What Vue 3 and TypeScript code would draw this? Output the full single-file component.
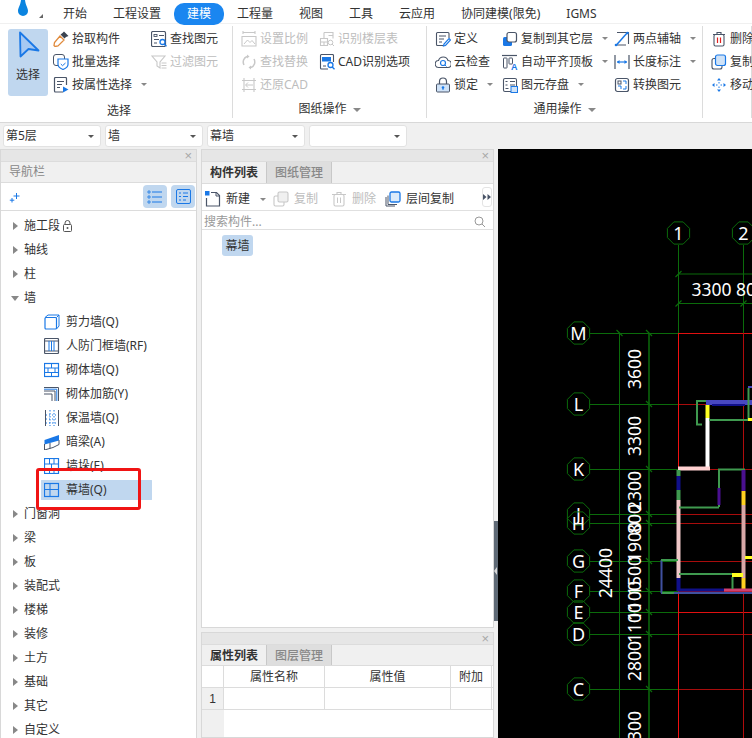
<script setup lang="ts">
const tabs = ['开始', '工程设置', '建模', '工程量', '视图', '工具', '云应用', '协同建模(限免)', 'IGMS']
const B = '#1a78e6'
const D = '#4a5568'
const G = '#c8c8c8'
const icons: Record<string, string> = {
  pick: `<path d="M11 .5l4.500 4.500-2.500 1-1.500 1.500-4-4L9.500 2z" fill="#3a4350"/><path d="M7 5l4 4-6 6-3 .5-1-1 .5-3z" fill="none" stroke="#e08a3c" stroke-width="1.300"/>`,
  batch: `<rect x=".5" y=".5" width="11" height="11" rx="2.500" fill="none" stroke="${D}"/><path d="M5 5h10v5.500c0 2.500-3 4.200-5 5-2-.8-5-2.500-5-5z" fill="#fff" stroke="${B}" stroke-width="1.200"/><path d="M7.800 10l1.700 1.700L12.500 9" fill="none" stroke="${B}"/>`,
  attr: `<path d="M10 15H2.500a1 1 0 0 1-1-1V1.500a1 1 0 0 1 1-1h10a1 1 0 0 1 1 1V8" fill="none" stroke="${D}" stroke-width="1.200"/><path d="M4 4.500h7M4 7.500h5M4 10.500h3" stroke="${D}"/><path d="M10 9.500l5.500 3-5.500 3z" fill="${B}"/>`,
  find: `<rect x=".5" y=".5" width="14" height="15" rx="1.500" fill="none" stroke="${D}" stroke-width="1.200"/><rect x="3" y="3.500" width="3" height="2" fill="none" stroke="${D}" stroke-width=".9"/><path d="M8 4.500h5M3 8.500h5M3 12h3" stroke="${D}"/><circle cx="11.500" cy="11" r="2.500" fill="#fff" stroke="${B}" stroke-width="1.300"/><path d="M13.200 13l2.300 2.300" stroke="${B}" stroke-width="1.300"/>`,
  filter: `<path d="M1 2h13L9 8v6l-3-2V8z" fill="none" stroke="${G}" stroke-width="1.100"/><path d="M10.500 9h5M10.500 11.500h5M10.500 14h5" stroke="${G}"/>`,
  scale: `<path d="M2 0v3M14 0v3M2 1.500h12M1 5.500v9.500h14V5.500z" fill="none" stroke="${G}" stroke-width="1.100"/><path d="M3 13l3.500-4 2.500 2.500 2-2 3 3.500" fill="none" stroke="${G}"/>`,
  layer: `<path d="M1.500 7.500h7v7h-7zM5 1.500h9v6M5 1.500v6M1.500 11h7M9.500 4.500H14M5 11v3.500" fill="none" stroke="${G}" stroke-width="1.100"/><circle cx="11.500" cy="11.500" r="2.300" fill="#fff" stroke="${G}"/><path d="M13 13l2 2" stroke="${G}"/>`,
  replace: `<path d="M3 11A6 6 0 0 1 6 2.500M13 5a6 6 0 0 1-3 8.500" fill="none" stroke="${G}" stroke-width="1.500"/><path d="M6 .5l2.500 2L6 4.500zM10 11.500l-2.500 2 2.500 2z" fill="${G}"/>`,
  restore: `<path d="M3 1v14M13 1v14M1 3.500h14M1 12.500h14" stroke="${G}" stroke-width="1.100"/><path d="M5 8h7M7 5.500L4.500 8 7 10.500" fill="none" stroke="${G}"/>`,
  cad: `<path d="M9 15H2.500a1 1 0 0 1-1-1V1.500a1 1 0 0 1 1-1h11a1 1 0 0 1 1 1V8" fill="none" stroke="${D}" stroke-width="1.100"/><rect x="3" y="3" width="9" height="4.500" fill="${B}"/><path d="M4 12h3" stroke="${D}"/><circle cx="11.500" cy="11" r="2.500" fill="#fff" stroke="${B}" stroke-width="1.300"/><path d="M13.200 13l2.300 2.300" stroke="${B}" stroke-width="1.300"/>`,
  define: `<path d="M14 7V2.500a1 1 0 0 0-1-1H2.500a1 1 0 0 0-1 1v11a1 1 0 0 0 1 1H8" fill="none" stroke="${D}" stroke-width="1.100"/><path d="M4 5h7M4 8h5M4 11h3" stroke="${D}"/><path d="M14 7.500l1.500 1.500L10.500 14.500 8.500 15l.5-2z" fill="none" stroke="${B}" stroke-width="1.200"/>`,
  cloud: `<path d="M4 13.500a3.500 3.500 0 0 1-.5-7A5 5 0 0 1 13 6.500a3.500 3.500 0 0 1-.5 7z" fill="none" stroke="${D}" stroke-width="1.100"/><circle cx="8" cy="9" r="2.500" fill="none" stroke="${B}" stroke-width="1.200"/><path d="M10 11l1.500 1.500" stroke="${B}"/>`,
  lock: `<path d="M4.500 7V4.500a3.500 3.500 0 0 1 7 0V7" fill="none" stroke="${D}" stroke-width="1.200"/><rect x="1.500" y="7" width="13" height="8" rx="1" fill="#cfe2f7" stroke="${D}"/><circle cx="8" cy="10.500" r="1.300" fill="${B}"/><path d="M8 11v2" stroke="${B}"/>`,
  copyto: `<rect x="1" y="6" width="9" height="9" rx="1.500" fill="${B}"/><rect x="5" y="1.500" width="9.500" height="9.500" rx="2" fill="#fff" stroke="${D}" stroke-width="1.200"/>`,
  align: `<path d="M0 1.500h15" stroke="${D}" stroke-width="1.200"/><rect x="1.500" y="4" width="3.500" height="10" rx=".5" fill="none" stroke="${D}"/><rect x="7" y="4" width="3.500" height="6" rx=".5" fill="none" stroke="${D}"/><text x="9" y="15.500" font-size="9" font-weight="700" fill="${B}" font-family="Liberation Sans">A</text>`,
  save: `<rect x="1.500" y="1.500" width="13" height="13" rx="1.500" fill="none" stroke="${D}" stroke-width="1.100"/><path d="M3.500 4.500h2M8 4.500h5M3.500 8h2M8 8h5M3.500 11.500h3" stroke="${D}"/><rect x="9" y="9.500" width="6.500" height="6" fill="#cfe2f7" stroke="${B}"/>`,
  axis: `<path d="M3 1.500h11.500V13M1 14h11" fill="none" stroke="${D}" stroke-width="1.100"/><path d="M2 14.500L13.500 1.500" stroke="${B}" stroke-width="1.500"/><circle cx="2" cy="14" r="1.300" fill="${B}"/><circle cx="13.500" cy="2" r="1.300" fill="${B}"/>`,
  dim: `<path d="M1 1v14M15 1v14" stroke="${D}" stroke-width="1.200"/><path d="M3 8h10" stroke="${B}" stroke-width="1.200"/><path d="M3 8l2.500-2v4zM13 8l-2.500-2v4z" fill="${B}"/>`,
  convert: `<rect x="1.500" y="1.500" width="13" height="13" rx="2" fill="none" stroke="${D}" stroke-width="1.200"/><rect x="4" y="4" width="3" height="3" fill="none" stroke="${D}"/><path d="M9 4h3v3M4 9h3v3M12 9v3H9" fill="none" stroke="${B}"/>`,
  trash: `<path d="M2 3.500h12M6 3.500V1.500h4v2" fill="none" stroke="${D}" stroke-width="1.100"/><rect x="3" y="3.500" width="10" height="11.500" rx="1.500" fill="none" stroke="${D}" stroke-width="1.100"/><path d="M6.500 6.500v5.500M9.500 6.500v5.500" stroke="#e02020" stroke-width="1.200"/>`,
  dup: `<rect x="1" y="4.500" width="10" height="10.500" rx="2" fill="none" stroke="${D}" stroke-width="1.100"/><rect x="4.500" y="1" width="10" height="10.500" rx="2" fill="#cfe2f7" stroke="${B}" stroke-width="1.200"/>`,
  move: `<path d="M8 1l2 2.500H6zM8 15l2-2.500H6zM1 8l2.500-2v4zM15 8l-2.500-2v4z" fill="${B}"/><path d="M8 5v1.500M8 9.500V11M5 8h1.500M9.500 8H11" stroke="${B}"/>`,
  shear: `<rect x="1" y="3.500" width="11.500" height="11.500" rx="1" fill="#fff" stroke="${B}" stroke-width="1.200"/><path d="M1 3.500l3-2.500h11v11l-2.500 3M12.500 3.500L15 1" fill="none" stroke="${B}"/>`,
  civil: `<rect x=".5" y=".5" width="14" height="15" rx="1" fill="none" stroke="${D}" stroke-width="1.200"/><path d="M1 3h13M1 13h13" stroke="${D}"/><path d="M5 3v10M7.500 3v10M10 3v10" stroke="${B}"/>`,
  brick: `<rect x=".5" y="1.500" width="14" height="13" fill="none" stroke="${B}" stroke-width="1.200"/><path d="M1 6h14M1 10.500h14M7.500 1.500V6M4 6v4.500M11 6v4.500M7.500 10.500v4" stroke="${B}"/>`,
  rebar: `<path d="M0 1.500h14.500V15M0 5h11v10M0 8h8v7" fill="none" stroke="${D}"/><path d="M0 3.200h12.800V15" fill="none" stroke="${B}"/>`,
  insu: `<path d="M1.500 0v16M14.500 0v16" stroke="${D}"/><path d="M6 0v16M10 0v16" stroke="${B}" stroke-dasharray="1.500 1.500"/><path d="M2 5h12M2 9h12M2 13h12" stroke="${B}" stroke-dasharray="1 2"/>`,
  beam: `<path d="M.5 6L15 1v5.500L.5 10.500z" fill="${B}"/><path d="M.5 10v6L9 13.500l6-3V6M6 9v5.500" fill="none" stroke="${D}"/>`,
  pilaster: `<rect x=".5" y=".5" width="14" height="15" fill="none" stroke="${B}" stroke-width="1.200"/><path d="M1 6h14M1 11h14M5.500 1v5M10 1v5M7.500 6v5M5.500 11v4M10 11v4" stroke="${B}"/>`,
  curtain: `<rect x=".5" y="1.500" width="14" height="13" fill="none" stroke="${B}" stroke-width="1.200"/><path d="M1 7.500h14M6 1.500V14.500" stroke="${B}"/>`,
  newdoc: `<path d="M6 1.500h5.500l3 3V15H1.500V7" fill="none" stroke="${D}" stroke-width="1.200"/><path d="M11 1.500v3.500h3.500" fill="none" stroke="${D}"/><rect x="0" y="0" width="4.500" height="4.500" fill="${B}"/>`,
  gcopy: `<rect x="1" y="5" width="10" height="10" rx="1.500" fill="none" stroke="${G}" stroke-width="1.100"/><rect x="5" y="1" width="10" height="10" rx="1.500" fill="#f0f0f0" stroke="${G}" stroke-width="1.100"/>`,
  gdel: `<path d="M1 3.500h14M6 3.500V1.500h4v2" fill="none" stroke="${G}" stroke-width="1.100"/><rect x="3" y="3.500" width="10" height="11.500" rx="1.500" fill="none" stroke="${G}" stroke-width="1.100"/><path d="M6.500 6.500v5.500M9.500 6.500v5.500" stroke="${G}"/>`,
  floorcopy: `<path d="M1 6v9h9M3 4.500v9h9" fill="none" stroke="${D}"/><rect x="5" y="1" width="10" height="10" rx="1.500" fill="#dcebfa" stroke="${B}" stroke-width="1.300"/>`,
}
type Item = { icon: string; label: string; caret?: boolean; off?: boolean }
type Col = { w: number; items: Item[] }
type Group = { w: number; label: string; caret: boolean; big?: boolean; cols: Col[] }
const groups: Group[] = [
  { w: 233, label: '选择', caret: false, big: true, cols: [
    { w: 98, items: [{ icon: 'pick', label: '拾取构件' }, { icon: 'batch', label: '批量选择' }, { icon: 'attr', label: '按属性选择', caret: true }] },
    { w: 80, items: [{ icon: 'find', label: '查找图元' }, { icon: 'filter', label: '过滤图元', off: true }] },
  ] },
  { w: 194, label: '图纸操作', caret: true, cols: [
    { w: 78, items: [{ icon: 'scale', label: '设置比例', off: true }, { icon: 'replace', label: '查找替换', off: true }, { icon: 'restore', label: '还原CAD', off: true }] },
    { w: 105, items: [{ icon: 'layer', label: '识别楼层表', off: true }, { icon: 'cad', label: 'CAD识别选项' }] },
  ] },
  { w: 276, label: '通用操作', caret: true, cols: [
    { w: 67, items: [{ icon: 'define', label: '定义' }, { icon: 'cloud', label: '云检查' }, { icon: 'lock', label: '锁定', caret: true }] },
    { w: 112, items: [{ icon: 'copyto', label: '复制到其它层', caret: true }, { icon: 'align', label: '自动平齐顶板', caret: true }, { icon: 'save', label: '图元存盘', caret: true }] },
    { w: 85, items: [{ icon: 'axis', label: '两点辅轴', caret: true }, { icon: 'dim', label: '长度标注', caret: true }, { icon: 'convert', label: '转换图元' }] },
  ] },
  { w: 49, label: '', caret: false, cols: [
    { w: 41, items: [{ icon: 'trash', label: '删除' }, { icon: 'dup', label: '复制' }, { icon: 'move', label: '移动' }] },
  ] },
]
const combos = ['第5层', '墙', '幕墙', '']
type Tree = { label: string; open?: boolean; lock?: boolean; icon?: string; sel?: boolean }
const tree: Tree[] = [
  { label: '施工段', lock: true }, { label: '轴线' }, { label: '柱' }, { label: '墙', open: true },
  { label: '剪力墙(Q)', icon: 'shear' }, { label: '人防门框墙(RF)', icon: 'civil' }, { label: '砌体墙(Q)', icon: 'brick' },
  { label: '砌体加筋(Y)', icon: 'rebar' }, { label: '保温墙(Q)', icon: 'insu' }, { label: '暗梁(A)', icon: 'beam' },
  { label: '墙垛(E)', icon: 'pilaster' }, { label: '幕墙(Q)', icon: 'curtain', sel: true },
  { label: '门窗洞' }, { label: '梁' }, { label: '板' }, { label: '装配式' }, { label: '楼梯' }, { label: '装修' },
  { label: '土方' }, { label: '基础' }, { label: '其它' }, { label: '自定义' },
]
const tools = [
  { icon: 'newdoc', label: '新建', caret: true, w: 68 },
  { icon: 'gcopy', label: '复制', off: true, w: 58 },
  { icon: 'gdel', label: '删除', off: true, w: 54 },
  { icon: 'floorcopy', label: '层间复制', w: 86 },
]
const GREEN = '#0b6b0b'
const rows = [
  { n: 'M', y: 333 }, { n: 'L', y: 404 }, { n: 'K', y: 469 }, { n: 'J', y: 514 }, { n: 'H', y: 523 },
  { n: 'G', y: 561 }, { n: 'F', y: 591 }, { n: 'E', y: 612 }, { n: 'D', y: 634 }, { n: 'C', y: 689 },
]
const cols = [{ n: '1', x: 678.5 }, { n: '2', x: 743.5 }]
const octagon = (x: number, y: number) => {
  const pts: string[] = []
  for (let i = 0; i < 8; i++) {
    const a = (Math.PI / 4) * i + Math.PI / 8
    pts.push(`${(x + 12 * Math.cos(a)).toFixed(1)},${(y + 12 * Math.sin(a)).toFixed(1)}`)
  }
  return pts.join(' ')
}
const dims = [
  { t: '3600', y: 369 }, { t: '3300', y: 436 }, { t: '2300', y: 491 }, { t: '800', y: 519 }, { t: '1900', y: 542 },
  { t: '1500', y: 576 }, { t: '1100', y: 601 }, { t: '1100', y: 623 }, { t: '2800', y: 661 }, { t: '3300', y: 731 },
]
const walls = [
  ['#ffffff', 707.5, 418, 707.5, 468, 4], ['#ffff20', 707.5, 405, 707.5, 418, 4],
  ['#3f9a4f', 697, 401, 706, 401, 2], ['#3f9a4f', 697, 400, 697, 425, 2], ['#3f9a4f', 696, 424.500, 702, 424.500, 2],
  ['#4848c0', 706, 402.500, 752, 402.500, 5], ['#10108a', 712, 405, 745, 405, 2],
  ['#3f9a4f', 709, 420, 748, 420, 2], ['#3f9a4f', 748.500, 388, 748.500, 420, 2], ['#4848c0', 748, 387, 752, 387, 2], ['#ffff20', 748, 419.500, 752, 419.500, 3],
  ['#ffd0d0', 678, 468.500, 710, 468.500, 4], ['#3f9a4f', 678.500, 470, 678.500, 476, 4], ['#10108a', 678.500, 476, 678.500, 490, 4],
  ['#3f9a4f', 678.500, 490, 678.500, 500, 4], ['#f0c8c8', 678.500, 500, 678.500, 578, 4], ['#10108a', 678.500, 578, 678.500, 591, 4],
  ['#3f9a4f', 719, 470, 719, 507, 2], ['#4a1090', 719, 488, 719, 505, 3], ['#3f9a4f', 679, 507.500, 719, 507.500, 2], ['#3f9a4f', 718, 469.500, 745, 469.500, 2],
  ['#4a1090', 743.500, 470, 743.500, 491, 4], ['#ffd020', 743.500, 491, 743.500, 505, 4], ['#d8a8a8', 743.500, 505, 743.500, 578, 4], ['#ffd020', 743.500, 578, 743.500, 590, 4],
  ['#ffff20', 745, 557.500, 752, 557.500, 3], ['#4050a0', 661.500, 560, 661.500, 593, 2], ['#3f9a4f', 661, 560, 678, 560, 2],
  ['#4050a0', 661, 593, 752, 593, 2], ['#3f9a4f', 662, 593, 674, 593, 2], ['#10108a', 678, 590, 724, 590, 3], ['#d04070', 724, 590, 752, 590, 3],
  ['#3f9a4f', 679, 574, 732, 574, 2], ['#ffff20', 732, 575, 743, 575, 4], ['#3f9a4f', 732.500, 577, 732.500, 589, 2],
] as [string, number, number, number, number, number][]
</script>

<template>
  <div class="app">
    <div class="tabbar">
      <svg class="drop" width="10" height="16" viewBox="0 0 10 16"><path d="M3 0h4c.5 5 3 8 3 11a5 5 0 0 1-10 0C0 8 2.500 5 3 0z" fill="#0a84e0" /></svg>
      <i class="corner"></i>
      <span v-for="t in tabs" :key="t" class="tab" :class="{ active: t === '建模' }">{{ t }}</span>
    </div>

    <div class="ribbon">
      <div v-for="g in groups" :key="g.w" class="group" :style="{ width: g.w + 'px' }">
        <div class="group-body">
          <div v-if="g.big" class="bigbtn">
            <svg width="22" height="27" viewBox="0 0 22 27"><path d="M2 1.500L20.500 19.500 10.500 18 2.500 25.500z" fill="#a6c8f2" stroke="#1a78e6" stroke-width="1.800" stroke-linejoin="round" /></svg>
            <span>选择</span>
          </div>
          <div v-for="(c, ci) in g.cols" :key="ci" class="col" :style="{ width: c.w + 'px' }">
            <div v-for="it in c.items" :key="it.label" class="item" :class="{ off: it.off }">
              <svg width="16" height="16" viewBox="0 0 16 16" v-html="icons[it.icon]"></svg>
              <span class="lbl">{{ it.label }}</span>
              <i v-if="it.caret" class="caret"></i>
            </div>
          </div>
        </div>
        <div class="group-label" :class="{ low: g.big }">{{ g.label }}<i v-if="g.caret" class="caret wide"></i></div>
      </div>
    </div>

    <div class="combos">
      <div v-for="(c, i) in combos" :key="i" class="combo"><span>{{ c }}</span><i class="caret dark"></i></div>
    </div>

    <div class="main">
      <aside class="nav">
        <div class="closebar"><span class="x">×</span></div>
        <div class="navtitle">导航栏</div>
        <div class="navtools">
          <svg width="12" height="12" viewBox="0 0 12 12"><path d="M7.500 2v6M4.500 5h6M3 7v4.500M.8 9.200h4.500" stroke="#1a78e6" fill="none" /></svg>
          <div class="toggles">
            <span class="toggle"><svg width="16" height="14" viewBox="0 0 16 14"><path d="M5 2h10M5 7h10M5 12h10" stroke="#1a78e6" /><path d="M1 1h2v2H1zM1 6h2v2H1zM1 11h2v2H1z" fill="none" stroke="#1a78e6" stroke-width=".8" /></svg></span>
            <span class="toggle"><svg width="15" height="15" viewBox="0 0 15 15"><rect x=".5" y=".5" width="14" height="14" rx="1.500" fill="none" stroke="#1a78e6" /><path d="M3 4h2M7 4h5M3 7.500h2M7 7.500h5M3 11h2M7 11h3" stroke="#1a78e6" /></svg></span>
          </div>
        </div>
        <div class="tree">
          <div v-for="n in tree" :key="n.label" class="node" :class="{ child: n.icon, sel: n.sel }">
            <template v-if="n.icon">
              <svg width="16" height="16" viewBox="0 0 16 16" v-html="icons[n.icon]"></svg>
              <span>{{ n.label }}</span>
            </template>
            <template v-else>
              <i :class="n.open ? 'tri-open' : 'tri'"></i>
              <span>{{ n.label }}</span>
              <svg v-if="n.lock" class="nodelock" width="9" height="12" viewBox="0 0 9 12"><path d="M2 4.500V3a2.500 2.500 0 0 1 5 0v1.500" fill="none" stroke="#555" /><rect x=".5" y="4.500" width="8" height="7" rx="1" fill="none" stroke="#555" /><circle cx="4.500" cy="8" r="1" fill="#555" /></svg>
            </template>
          </div>
        </div>
        <div class="redbox"></div>
      </aside>

      <section class="mid">
        <div class="panel top">
          <div class="closebar"><span class="x">×</span></div>
          <div class="tabs2"><span class="t2 on">构件列表</span><span class="t2">图纸管理</span></div>
          <div class="midtools">
            <div v-for="t in tools" :key="t.label" class="tool" :class="{ off: t.off }" :style="{ width: t.w + 'px' }">
              <svg width="16" height="16" viewBox="0 0 16 16" v-html="icons[t.icon]"></svg>
              <span>{{ t.label }}</span>
              <i v-if="t.caret" class="caret"></i>
            </div>
            <span class="more"><svg width="8" height="6" viewBox="0 0 8 6"><path d="M0 0l3.500 3L0 6zM4.500 0L8 3 4.500 6z" fill="#4a5568" /></svg></span>
          </div>
          <div class="search">
            <span>搜索构件...</span>
            <svg width="12" height="12" viewBox="0 0 12 12"><circle cx="5" cy="5" r="4" fill="none" stroke="#999" /><path d="M8 8l3 3" stroke="#999" /></svg>
          </div>
          <div class="list"><span class="chip">幕墙</span></div>
        </div>
        <div class="panel bottom">
          <div class="closebar"><span class="x">×</span></div>
          <div class="tabs2"><span class="t2 on">属性列表</span><span class="t2">图层管理</span></div>
          <div class="table">
            <div class="tr head"><span class="c0"></span><span class="c1">属性名称</span><span class="c2">属性值</span><span class="c3">附加</span></div>
            <div class="tr"><span class="c0 num">1</span><span class="c1"></span><span class="c2"></span><span class="c3"></span></div>
            <div class="tail"></div>
          </div>
        </div>
      </section>

      <div class="splitter"><i class="handle"></i></div>

      <div class="canvas">
        <svg width="254" height="589" viewBox="498 149 254 589">
          <line v-for="r in rows" :key="'g' + r.n" x1="590" x2="678.500" :y1="r.y + 0.5" :y2="r.y + 0.5" :stroke="GREEN" stroke-width="1" />
          <line v-for="r in rows" :key="'r' + r.n" x1="678.500" x2="752" :y1="r.y + 0.5" :y2="r.y + 0.5" :stroke="r.n === 'M' || r.n === 'E' ? '#e01010' : '#a80c0c'" stroke-width="1" />
          <line x1="619.500" x2="619.500" y1="333" y2="738" :stroke="GREEN" />
          <line x1="649" x2="649" y1="333" y2="738" :stroke="GREEN" stroke-width="1.500" />
          <line x1="678.500" x2="678.500" y1="245" y2="333" :stroke="GREEN" />
          <line x1="743.500" x2="743.500" y1="245" y2="333" :stroke="GREEN" />
          <line x1="678.500" x2="752" y1="274" y2="274" :stroke="GREEN" />
          <line x1="678.500" x2="752" y1="303.500" y2="303.500" :stroke="GREEN" />
          <line x1="678.500" x2="678.500" y1="333" y2="738" stroke="#f01010" />
          <line x1="743.500" x2="743.500" y1="333" y2="738" stroke="#b00c0c" />
          <path v-for="r in rows" :key="'t' + r.n" :d="`M646 ${r.y - 3}l6 6`" :stroke="GREEN" stroke-width="1.200" />
          <path d="M616.500 330l6 6M675.500 277l6-6M675.500 306.500l6-6M740.500 306.500l6-6" :stroke="GREEN" stroke-width="1.200" />
          <line v-for="(w, i) in walls" :key="i" :x1="w[1]" :y1="w[2]" :x2="w[3]" :y2="w[4]" :stroke="w[0]" :stroke-width="w[5]" />
          <g v-for="r in rows" :key="'c' + r.n">
            <polygon :points="octagon(578.5, r.y)" fill="none" :stroke="GREEN" />
            <text class="cadletter" x="578.500" :y="r.y + 6.500" text-anchor="middle">{{ r.n }}</text>
          </g>
          <g v-for="c in cols" :key="c.n">
            <polygon :points="octagon(c.x, 233)" fill="#000" :stroke="GREEN" />
            <text class="cadletter" :x="c.x" y="239.500" text-anchor="middle">{{ c.n }}</text>
          </g>
          <text class="caddim" x="691.500" y="296">3300 80</text>
          <text v-for="d in dims" :key="d.t + d.y" class="caddim" text-anchor="middle" :transform="`translate(641 ${d.y}) rotate(-90)`">{{ d.t }}</text>
          <text class="caddim" text-anchor="middle" transform="translate(612 573) rotate(-90)">24400</text>
        </svg>
      </div>
    </div>
  </div>
</template>

<style>
html, body { margin: 0; background: #f0f0f0; }
</style>

<style scoped>
.app { width: 752px; height: 738px; overflow: hidden; display: flex; flex-direction: column; background: #f0f0f0; color: #333; font: 12px/16px "Noto Sans", "Noto Sans CJK SC", sans-serif; }
i { display: block; font-style: normal; }
.tabbar { position: relative; height: 23px; flex: none; display: flex; gap: 26px; padding-left: 63px; align-items: center; box-sizing: border-box; background: #fff; padding-top: 5px; }
.drop { position: absolute; left: 18px; top: 0; }
.corner { position: absolute; left: 39px; top: 14px; border-left: 4px solid transparent; border-bottom: 4px solid #666; }
.tab { position: relative; z-index: 0; white-space: nowrap; }
.tab.active { color: #fff; }
.tab.active::before { content: ""; position: absolute; z-index: -1; left: -13px; right: -13px; top: -3px; bottom: -3px; border-radius: 10px; background: #1a86f0; }
.ribbon { height: 98px; flex: none; display: flex; background: #fff; border-top: 1px solid #f0f0f0; border-bottom: 1px solid #d8d8d8; overflow: hidden; }
.group { box-sizing: border-box; height: 92px; margin-top: 2px; border-right: 1px solid #dcdcdc; padding-left: 8px; position: relative; flex: none; }
.group-body { display: flex; height: 70px; }
.bigbtn { width: 40px; height: 67px; margin: 3px 5px 0 0; flex: none; border-radius: 3px; background: #c0d7ef; display: flex; flex-direction: column; align-items: center; }
.bigbtn svg { margin-top: 2px; margin-left: 1px; }
.bigbtn span { margin-top: 9px; }
.col { flex: none; padding-top: 1px; }
.item { height: 23px; display: flex; align-items: center; gap: 3px; white-space: nowrap; }
.item svg { flex: none; }
.off { color: #bdbdbd; }
.caret { width: 0; height: 0; border-left: 3px solid transparent; border-right: 3px solid transparent; border-top: 3px solid #888; margin-left: 6px; }
.caret.wide { display: inline-block; border-left-width: 4px; border-right-width: 4px; border-top-width: 4px; vertical-align: middle; margin-left: 6px; }
.caret.dark { border-top-color: #555; margin: 0; }
.group-label { text-align: center; height: 22px; line-height: 26px; margin-left: -8px; }
.group-label.low { line-height: 30px; padding-left: 6px; }
.combos { height: 26px; flex: none; display: flex; gap: 4px; padding: 2px 0 0 3px; box-sizing: border-box; background: #f0f0f0; }
.combo { width: 98px; height: 22px; box-sizing: border-box; background: #fff; border: 1px solid #e2e2e2; border-radius: 3px; display: flex; align-items: center; justify-content: space-between; padding: 0 6px 0 2px; }
.main { flex: 1; min-height: 0; display: flex; background: #f0f0f0; }
.nav { position: relative; width: 197px; flex: none; background: #fff; border: solid #d8d8d8; border-width: 1px 1px 0 1px; box-sizing: border-box; }
.closebar { height: 11px; flex: none; background: #e6e6e6; display: flex; justify-content: flex-end; align-items: center; padding-right: 4px; }
.x { color: #a8a8a8; font: 13px/11px "Liberation Sans", sans-serif; }
.navtitle { height: 20px; line-height: 20px; padding-left: 8px; color: #888; background: #f0f0f0; border-top: 1px solid #dcdcdc; border-bottom: 1px solid #dcdcdc; }
.navtools { height: 28px; display: flex; align-items: center; justify-content: space-between; padding: 0 1px 0 8px; border-bottom: 1px solid #dcdcdc; box-sizing: border-box; }
.toggles { display: flex; gap: 4px; }
.toggle { width: 24px; height: 23px; border-radius: 4px; background: #c0d7ef; display: flex; align-items: center; justify-content: center; }
.tree { padding-top: 3px; }
.node { height: 24px; display: flex; align-items: center; padding-left: 23px; position: relative; white-space: nowrap; }
.node.child { margin-left: 40px; padding-left: 3px; gap: 6px; width: 111px; box-sizing: border-box; }
.node.child.sel { background: linear-gradient(#fff 2px, #c0d7ef 2px, #c0d7ef 22px, #fff 22px); border-radius: 3px; }
.tri { position: absolute; left: 12px; top: 8px; border-left: 5px solid #888; border-top: 4px solid transparent; border-bottom: 4px solid transparent; }
.tri-open { position: absolute; left: 10px; top: 10px; border-top: 5px solid #888; border-left: 4px solid transparent; border-right: 4px solid transparent; }
.nodelock { margin-left: 3px; }
.redbox { position: absolute; left: 35px; top: 318px; width: 105px; height: 42px; box-sizing: border-box; border: 3px solid #f01414; border-radius: 3px; }
.mid { width: 293px; flex: none; margin-left: 4px; display: flex; flex-direction: column; gap: 4px; }
.panel { box-sizing: border-box; border: 1px solid #d8d8d8; background: #fff; display: flex; flex-direction: column; }
.panel.top { height: 479px; flex: none; }
.panel.bottom { flex: 1; min-height: 0; }
.tabs2 { height: 21px; flex: none; display: flex; background: #f0f0f0; border-top: 1px solid #dcdcdc; border-bottom: 1px solid #dcdcdc; }
.panel.bottom .tabs2 { height: 20px; }
.t2 { width: 64px; text-align: center; line-height: 21px; color: #888; background: #dedede; border-right: 1px solid #c8c8c8; font-weight: 500; }
.t2.on { color: #333; font-weight: 700; background: #f0f0f0; }
.midtools { height: 27px; flex: none; display: flex; align-items: center; padding: 4px 0 0 3px; position: relative; border-bottom: 1px solid #e0e0e0; box-sizing: border-box; }
.tool { display: flex; align-items: center; gap: 5px; white-space: nowrap; flex: none; }
.tool .caret { margin-left: 5px; }
.more { position: absolute; right: 1px; top: 3px; width: 10px; height: 20px; box-sizing: border-box; border: 1px solid #e4e4e4; border-radius: 3px; display: flex; align-items: center; justify-content: center; }
.search { height: 19px; flex: none; display: flex; align-items: center; justify-content: space-between; padding: 3px 7px 0 2px; box-sizing: border-box; color: #999; border-bottom: 1px solid #e0e0e0; }
.list { flex: 1; padding: 5px 0 0 20px; }
.chip { display: inline-block; width: 31px; height: 21px; line-height: 21px; text-align: center; background: #c0d7ef; border-radius: 3px; }
.table { flex: 1; display: flex; flex-direction: column; min-height: 0; }
.tr { height: 21px; flex: none; display: flex; border-bottom: 1px solid #dcdcdc; text-align: center; line-height: 22px; }
.tr span { box-sizing: border-box; border-right: 1px solid #dcdcdc; flex: none; }
.tr .c0 { width: 22px; }
.tr:not(.head) .c0, .tail { background: #f0f0f0; }
.num { font-family: "Liberation Sans", sans-serif; }
.tr .c1 { width: 101px; }
.tr .c2 { width: 126px; }
.tr .c3 { width: 41px; }
.tail { flex: 1; width: 22px; }
.splitter { width: 4px; flex: none; position: relative; }
.handle { position: absolute; left: 0; top: 372px; width: 4px; height: 100px; background: #5f6a76; }
.handle::after { content: ""; position: absolute; left: 0; top: 46px; border-right: 3px solid #d8d8d8; border-top: 4px solid transparent; border-bottom: 4px solid transparent; }
.canvas { flex: 1; min-width: 0; background: #000; overflow: hidden; }
.canvas svg { display: block; }
.cadletter { fill: #fff; font: 18px "Noto Sans", sans-serif; }
.caddim { fill: #fff; font: 17.500px "Noto Sans", sans-serif; }
</style>
